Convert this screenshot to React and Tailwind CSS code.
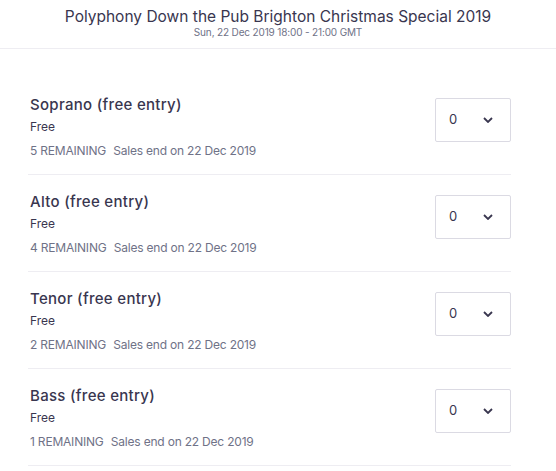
import React from 'react';

const tickets = [
  { name: 'Soprano (free entry)', left: 5 },
  { name: 'Alto (free entry)', left: 4 },
  { name: 'Tenor (free entry)', left: 2 },
  { name: 'Bass (free entry)', left: 1 },
];

const TicketRow = ({ ticket }) => (
  <div className="flex justify-between border-b border-[#eeedf2] pt-4 pb-[14px]">
    <div className="flex flex-col pl-[2px]">
      <div className="text-[15px] leading-[22px] font-medium tracking-[0.3px] text-[#39364f]">{ticket.name}</div>
      <div className="mt-[2px] text-[12px] leading-[18px] text-[#39364f]">Free</div>
      <div className="mt-[6px] text-[12px] leading-[18px] text-[#6f7287] tracking-[-0.2px]">
        {ticket.left} REMAINING <span className="ml-[4px]">Sales end on 22 Dec 2019</span>
      </div>
    </div>
    <div className="mt-[4px] flex h-[44px] w-[76px] items-center justify-between rounded-[2px] border border-[#dbdae3] pl-[13px] pr-[17px]">
      <span className="text-[13px] text-[#39364f]">0</span>
      <svg width="10" height="6" viewBox="0 0 10 6" fill="none">
        <path d="M1 1l4 4 4-4" stroke="#39364f" strokeWidth="1.8" />
      </svg>
    </div>
  </div>
);

const App = () => {
  return (
    <div className="min-h-screen bg-white" style={{ fontFamily: 'Inter, "Noto Sans", sans-serif' }}>
      <div className="flex h-[49px] flex-col items-center border-b border-[#eeedf2] pt-[7px]">
        <h1 className="text-[15.5px] leading-[20px] text-[#39364f]">Polyphony Down the Pub Brighton Christmas Special 2019</h1>
        <div className="text-[10px] leading-[11px] text-[#6f7287] tracking-[-0.15px]">Sun, 22 Dec 2019 18:00 - 21:00 GMT</div>
      </div>
      <div className="ml-7 w-[483px] pt-[29px]">
        {tickets.map((t) => (
          <TicketRow key={t.name} ticket={t} />
        ))}
      </div>
    </div>
  );
};

export default App;
